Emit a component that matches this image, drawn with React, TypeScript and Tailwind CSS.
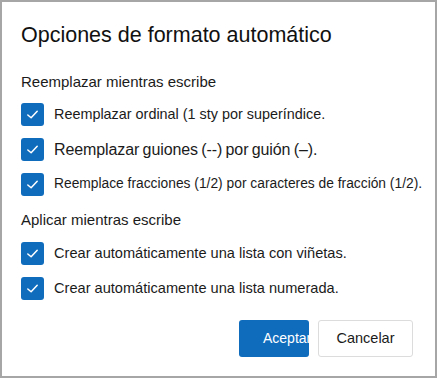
import React from 'react';

const Check = () => (
  <span className="flex h-[23px] w-[23px] shrink-0 items-center justify-center rounded-[3px] bg-[#0f6cbd]">
    <svg width="15" height="15" viewBox="0 0 16 16" fill="none">
      <path d="M3 8.5 L6.5 11.5 L13 4.5" stroke="white" strokeWidth="1.6" strokeLinecap="round" strokeLinejoin="round" />
    </svg>
  </span>
);

const Row: React.FC<{ text: string; cls: string }> = ({ text, cls }) => (
  <label className="flex h-[23px] items-center gap-[10px]">
    <Check />
    <span className={`whitespace-nowrap text-[#1b1b1b] ${cls}`}>{text}</span>
  </label>
);

const App: React.FC = () => {
  return (
    <div className="h-[378px] w-[437px] border-2 border-[#a6a6a6] bg-white font-['Liberation_Sans',Arial,sans-serif]">
      <div className="flex flex-col pl-[19px] pt-[19px]">
        <h1 className="text-[21.5px] leading-[28px] text-[#111]">Opciones de formato automático</h1>

        <p className="mt-[24px] text-[15px] leading-[18px] text-[#1b1b1b]">Reemplazar mientras escribe</p>
        <div className="mt-[12px] flex flex-col gap-[12px]">
          <Row text="Reemplazar ordinal (1 sty por superíndice." cls="text-[14.4px]" />
          <Row text="Reemplazar guiones (--) por guión (–)." cls="text-[16px] tracking-[-0.1px] [word-spacing:-1px]" />
          <Row text="Reemplace fracciones (1/2) por caracteres de fracción (1/2)." cls="text-[13.8px]" />
        </div>

        <p className="mt-[15px] text-[15px] leading-[18px] text-[#1b1b1b]">Aplicar mientras escribe</p>
        <div className="mt-[13px] flex flex-col gap-[12px]">
          <Row text="Crear automáticamente una lista con viñetas." cls="text-[14.6px]" />
          <Row text="Crear automáticamente una lista numerada." cls="text-[14.6px]" />
        </div>

        <div className="mt-[20px] flex justify-end gap-[9px] pr-[22px]">
          <button className="h-[37px] w-[70px] overflow-hidden whitespace-nowrap rounded-[3px] bg-[#0f6cbd] pl-[24px] text-left text-[14px] text-white">
            Aceptar
          </button>
          <button className="h-[37px] w-[95px] rounded-[3px] border border-[#dcdcdc] bg-white text-[14.5px] text-[#1b1b1b]">
            Cancelar
          </button>
        </div>
      </div>
    </div>
  );
};

export default App;
